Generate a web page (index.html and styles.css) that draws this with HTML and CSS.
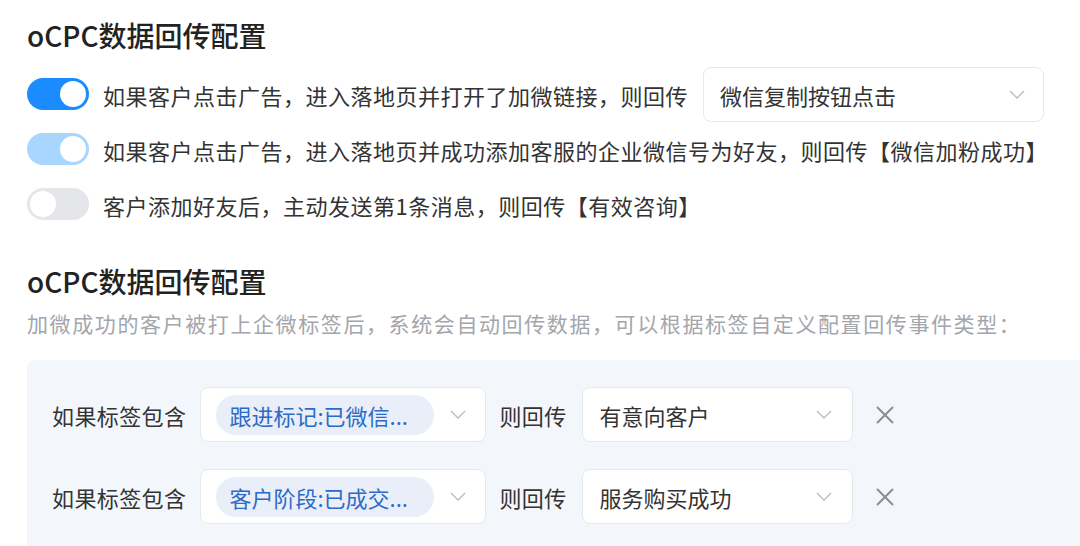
FILE: index.html
```html
<!DOCTYPE html>
<html lang="zh-CN">
<head>
    <meta charset="UTF-8">
    <title>oCPC数据回传配置</title>
    <link rel="stylesheet" href="styles.css">
</head>
<body>
<main class="page">
    <!-- switches for the built-in conversion events -->
    <section class="block">
        <h2 class="title">oCPC数据回传配置</h2>
        <ul class="switch-list">
            <li class="switch-row">
                <span class="toggle on"><span class="knob"></span></span>
                <span class="switch-text">如果客户点击广告，进入落地页并打开了加微链接，则回传</span>
                <div class="select select-wide">
                    <span class="select-value">微信复制按钮点击</span>
                    <svg class="chevron" viewBox="0 0 16 9" width="16" height="9"><polyline points="1,1 8,8 15,1"/></svg>
                </div>
            </li>
            <li class="switch-row">
                <span class="toggle on disabled"><span class="knob"></span></span>
                <span class="switch-text">如果客户点击广告，进入落地页并成功添加客服的企业微信号为好友，则回传【微信加粉成功】</span>
            </li>
            <li class="switch-row">
                <span class="toggle"><span class="knob"></span></span>
                <span class="switch-text">客户添加好友后，主动发送第1条消息，则回传【有效咨询】</span>
            </li>
        </ul>
    </section>

    <!-- tag based rules -->
    <section class="block block-tags">
        <h2 class="title">oCPC数据回传配置</h2>
        <p class="subtitle">加微成功的客户被打上企微标签后，系统会自动回传数据，可以根据标签自定义配置回传事件类型：</p>
        <div class="rule-panel">
            <div class="rule-row">
                <span class="rule-label">如果标签包含</span>
                <div class="select select-tag">
                    <span class="tag">跟进标记:已微信...</span>
                    <svg class="chevron" viewBox="0 0 16 9" width="16" height="9"><polyline points="1,1 8,8 15,1"/></svg>
                </div>
                <span class="rule-label">则回传</span>
                <div class="select select-event">
                    <span class="select-value">有意向客户</span>
                    <svg class="chevron" viewBox="0 0 16 9" width="16" height="9"><polyline points="1,1 8,8 15,1"/></svg>
                </div>
                <svg class="remove" viewBox="0 0 18 18" width="18" height="18"><path d="M1 1 L17 17 M17 1 L1 17"/></svg>
            </div>
            <div class="rule-row">
                <span class="rule-label">如果标签包含</span>
                <div class="select select-tag">
                    <span class="tag">客户阶段:已成交...</span>
                    <svg class="chevron" viewBox="0 0 16 9" width="16" height="9"><polyline points="1,1 8,8 15,1"/></svg>
                </div>
                <span class="rule-label">则回传</span>
                <div class="select select-event">
                    <span class="select-value">服务购买成功</span>
                    <svg class="chevron" viewBox="0 0 16 9" width="16" height="9"><polyline points="1,1 8,8 15,1"/></svg>
                </div>
                <svg class="remove" viewBox="0 0 18 18" width="18" height="18"><path d="M1 1 L17 17 M17 1 L1 17"/></svg>
            </div>
        </div>
    </section>
</main>
</body>
</html>
```

FILE: styles.css
```css
html, body {
    margin: 0;
    background: #fff;
}
body {
    font-family: "Noto Sans CJK SC", "Noto Sans", sans-serif;
    color: #333;
    font-size: 22px;
    overflow: hidden;
}

.page {
    padding: 17px 0 0 27px;
}

.title {
    margin: 0;
    font-size: 28px;
    line-height: 36px;
    font-weight: 500;
    color: #222;
}

/* switch rows */
.switch-list {
    list-style: none;
    margin: 14px 0 0 0;
    padding: 0;
}
.switch-row {
    display: flex;
    align-items: center;
    min-height: 55px;
}
.switch-text {
    margin-left: 14px;
    line-height: 32px;
    letter-spacing: 0.5px;
}

.toggle {
    display: flex;
    align-items: center;
    box-sizing: border-box;
    width: 62px;
    height: 32px;
    padding: 3px;
    border-radius: 16px;
    background: #e4e6e9;
    flex: none;
    position: relative;
    top: -1px;
}
.toggle .knob {
    width: 26px;
    height: 26px;
    border-radius: 50%;
    background: #fff;
}
.toggle.on {
    background: #1a8cff;
    justify-content: flex-end;
}
.toggle.on.disabled {
    background: #a9d6ff;
}

/* selects */
.select {
    display: flex;
    align-items: center;
    justify-content: space-between;
    box-sizing: border-box;
    height: 55px;
    border: 1px solid #e6e8eb;
    border-radius: 8px;
    background: #fff;
    flex: none;
}
.select-value {
    line-height: 30px;
}
.chevron {
    fill: none;
    stroke: #b8bbc0;
    stroke-width: 1.3;
}
.select-wide {
    width: 341px;
    margin-left: 15px;
    padding: 0 18px 0 16px;
}

/* tag rules */
.block-tags {
    margin-top: 31px;
}
.subtitle {
    margin: 9px 0 0 0;
    line-height: 30px;
    font-size: 21px;
    letter-spacing: 1.6px;
    color: #a3a6ab;
}
.rule-panel {
    margin-top: 22px;
    padding: 27px 0 40px 25px;
    background: #f3f7fc;
    border-radius: 8px 0 0 0;
    display: flex;
    flex-direction: column;
    gap: 27px;
}
.rule-row {
    display: flex;
    align-items: center;
}
.rule-label {
    line-height: 30px;
    letter-spacing: 0.4px;
}
.select-tag {
    width: 286px;
    margin: 0 13px 0 14px;
    padding: 0 19px 0 15px;
}
.tag {
    display: block;
    width: 218px;
    box-sizing: border-box;
    padding: 0 13px;
    line-height: 40px;
    border-radius: 20px;
    background: #eaeef9;
    color: #2b6cc8;
}
.select-event {
    width: 271px;
    margin-left: 15px;
    padding: 0 20px 0 17px;
}
.remove {
    margin-left: 23px;
    fill: none;
    stroke: #8a8d91;
    stroke-width: 2;
}
```
